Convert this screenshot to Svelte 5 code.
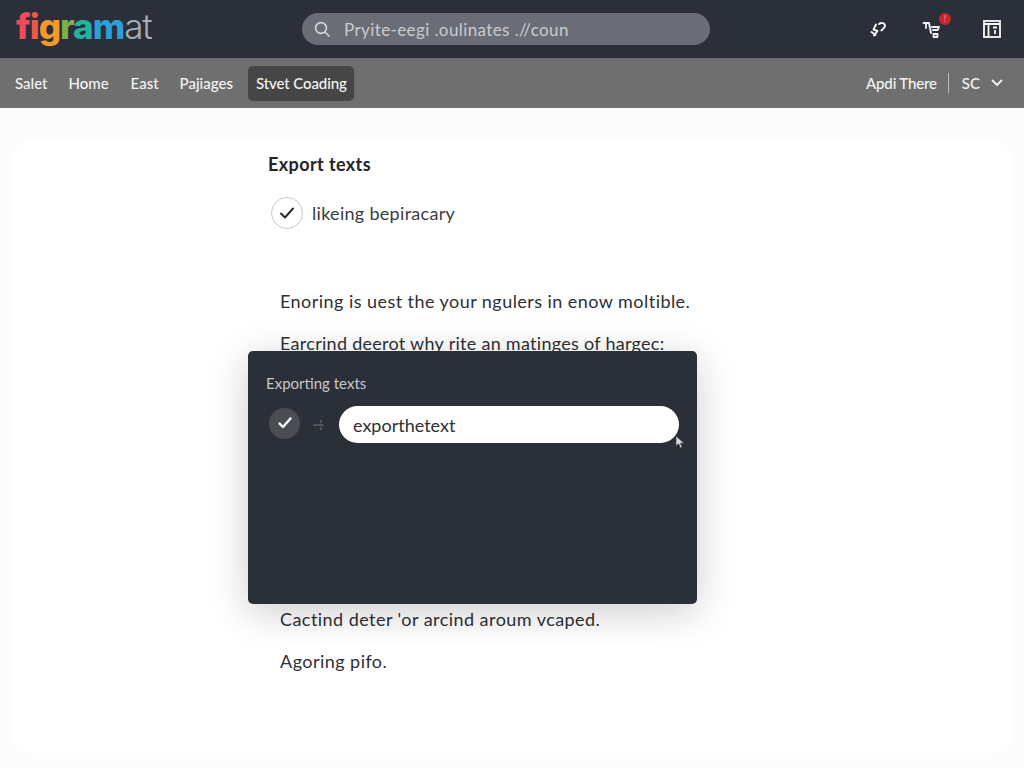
<script>
  const navItems = ['Salet', 'Home', 'East', 'Pajiages'];
</script>

<div class="page">
  <header class="topbar">
    <div class="logo">
      <span class="l1">f</span><span class="l2">i</span><span class="l3">g</span><span class="l4">r</span><span class="l5">a</span><span class="l6">m</span><span class="rest">at</span>
    </div>
    <div class="search">
      <svg width="18" height="18" viewBox="0 0 18 18" fill="none" stroke="#d4d6da" stroke-width="1.6" stroke-linecap="round">
        <circle cx="8" cy="8" r="5.4" />
        <path d="M12 12l4 4" />
      </svg>
      <span>Pryite-eegi .oulinates .//coun</span>
    </div>
    <div class="top-icons">
      <svg width="20" height="20" viewBox="0 0 20 20" fill="none" stroke="#f4f4f4" stroke-width="1.9" stroke-linecap="round" stroke-linejoin="round">
        <path d="M11 5c2.2-2 6-1 6 1.8 0 2.2-2.4 3-3.6 4.6" />
        <path d="M8 5.5L5.5 10.5l4 1.5L6 16.5M3.5 13l4 3" />
      </svg>
      <div class="bell">
        <svg width="20" height="20" viewBox="0 0 20 20" fill="none" stroke="#f4f4f4" stroke-width="1.8" stroke-linecap="round" stroke-linejoin="round">
          <path d="M1.5 4h5.5l2 10" />
          <path d="M4 4v5M10 8h7l-1.2 3H11M11.5 15h4v3h-4z" />
        </svg>
        <span class="dot">!</span>
      </div>
      <svg width="20" height="20" viewBox="0 0 20 20" fill="none" stroke="#fafafa" stroke-width="1.8">
        <rect x="2" y="2" width="16" height="16" />
        <path d="M2 5h16M6.5 5v13M11 8.5h4M13 11v4" />
      </svg>
    </div>
  </header>

  <nav class="navbar">
    <div class="nav-left">
      {#each navItems as item}
        <span class="nav-item">{item}</span>
      {/each}
      <span class="nav-active">Stvet Coading</span>
    </div>
    <div class="nav-right">
      <span class="api">Apdi There</span>
      <i class="sep"></i>
      <span>SC</span>
      <svg width="12" height="8" viewBox="0 0 12 8" fill="none" stroke="#f2f2f2" stroke-width="1.8" stroke-linecap="round" stroke-linejoin="round">
        <path d="M1.5 1.5L6 6l4.5-4.5" />
      </svg>
    </div>
  </nav>

  <main class="content">
    <section class="card">
      <h2>Export texts</h2>
      <div class="check-row">
        <span class="check">
          <svg width="16" height="14" viewBox="0 0 16 14" fill="none" stroke="#26292e" stroke-width="1.9" stroke-linecap="round" stroke-linejoin="round">
            <path d="M2 7.5l4 4L14 2.5" />
          </svg>
        </span>
        <span>likeing bepiracary</span>
      </div>
      <div class="copy">
        <p>Enoring is uest the your ngulers in enow moltible.</p>
        <p>Earcrind deerot why rite an matinges of hargec:</p>
        <p class="after">Cactind deter 'or arcind aroum vcaped.</p>
        <p>Agoring pifo.</p>
      </div>
    </section>

    <div class="dialog">
      <div class="dialog-title">Exporting texts</div>
      <div class="dialog-row">
        <span class="dialog-check">
          <svg width="16" height="14" viewBox="0 0 16 14" fill="none" stroke="#fff" stroke-width="2.4" stroke-linecap="round" stroke-linejoin="round">
            <path d="M2.5 7.5l3.5 3.5 7.5-8.5" />
          </svg>
        </span>
        <svg class="split" width="14" height="16" viewBox="0 0 14 16" fill="none" stroke="#5f6369" stroke-width="1.5" stroke-linecap="round">
          <path d="M2 8h9M9 3.5v2M9 10.5v2" />
        </svg>
        <div class="field">exporthetext</div>
      </div>
      <svg class="cursor" width="10" height="14" viewBox="0 0 10 14">
        <path d="M1 1v10l2.6-2.2L5.4 13l1.8-.8-1.8-4H9z" fill="#d8dadd" stroke="#2b3038" stroke-width=".6" />
      </svg>
    </div>
  </main>
</div>

<style>
  :global(body) {
    background: #fcfcfc;
  }
  .page {
    width: 1024px;
    height: 768px;
    overflow: hidden;
    font-family: Lato, "Open Sans", sans-serif;
    display: flex;
    flex-direction: column;
  }
  .topbar {
    height: 58px;
    flex: none;
    background: #2a2f39;
    display: flex;
    align-items: center;
    padding: 0 22px 0 16px;
    box-sizing: border-box;
  }
  .logo {
    font-family: Inter, sans-serif;
    font-size: 35px;
    letter-spacing: -1px;
    width: 286px;
    margin-top: -6px;
    font-weight: 800;
    line-height: 1;
  }
  .l1 { color: #ee4c5c; }
  .l2 { color: #f0564a; }
  .l3 { color: #f39a2b; }
  .l4 { color: #7fae4b; }
  .l5 { color: #22b3a0; }
  .l6 { color: #2b9fd6; }
  .rest {
    color: #a9adb3;
    font-weight: 300;
  }
  .search {
    width: 408px;
    height: 32px;
    border-radius: 16px;
    background: #6a6d75;
    display: flex;
    align-items: center;
    gap: 13px;
    padding: 0 11px;
    box-sizing: border-box;
    color: #c9cbce;
    font-size: 17px;
    letter-spacing: 0.4px;
  }
  .top-icons {
    margin-left: auto;
    display: flex;
    align-items: center;
    gap: 34px;
  }
  .bell {
    position: relative;
    display: flex;
    margin-right: 6px;
  }
  .dot {
    position: absolute;
    top: -6px;
    right: -9px;
    width: 12px;
    height: 12px;
    border-radius: 50%;
    background: #c8262c;
    color: #f4a3a3;
    font-size: 9px;
    line-height: 12px;
    text-align: center;
  }
  .navbar {
    height: 50px;
    flex: none;
    background: #6f6f6f;
    display: flex;
    align-items: center;
    justify-content: space-between;
    padding: 0 22px 0 15px;
    box-sizing: border-box;
    color: #f5f5f5;
    font-size: 15px;
    font-weight: 500;
  }
  .nav-left {
    display: flex;
    align-items: center;
    gap: 21px;
  }
  .nav-item:nth-child(2) {
    margin-right: 1px;
  }
  .nav-active {
    background: #464646;
    border-radius: 5px;
    padding: 0 8px;
    width: 106px;
    box-sizing: border-box;
    height: 35px;
    line-height: 34px;
    margin-left: -6px;
    white-space: nowrap;
    letter-spacing: -0.1px;
  }
  .nav-right {
    display: flex;
    align-items: center;
    gap: 11px;
  }
  .api {
    letter-spacing: -0.15px;
  }
  .nav-right svg {
    margin-right: -1px;
  }
  .sep {
    width: 1px;
    height: 20px;
    background: #bdbdbd;
    margin-right: 2px;
  }
  .content {
    flex: 1;
    position: relative;
    padding: 33px 12px 16px;
    min-height: 0;
    box-sizing: border-box;
  }
  .card {
    height: 100%;
    padding: 12px 0 0 256px;
    box-sizing: border-box;
    background: #fff;
    border-radius: 24px;
    box-shadow: 0 0 12px 2px #fff;
    color: #2a2c30;
  }
  h2 {
    margin: 0;
    font-size: 18px;
    line-height: 22px;
    font-weight: 700;
    letter-spacing: 0.4px;
    color: #222429;
  }
  .check-row {
    display: flex;
    align-items: center;
    gap: 9px;
    margin: 22px 0 0 3px;
    font-size: 18px;
    letter-spacing: 0.3px;
    color: #3a3c40;
  }
  .check {
    width: 32px;
    height: 32px;
    box-sizing: border-box;
    border: 1px solid #c9c9c9;
    border-radius: 50%;
    display: flex;
    align-items: center;
    justify-content: center;
    background: #fff;
  }
  .copy {
    margin: 60px 0 0 12px;
  }
  .copy p {
    margin: 0 0 18px;
    font-size: 18px;
    line-height: 24px;
    letter-spacing: 0.45px;
    color: #2e3034;
  }
  .copy p:nth-child(2) {
    letter-spacing: 0.28px;
  }
  .copy p.after {
    margin-top: 252px;
  }
  .dialog {
    position: absolute;
    left: 248px;
    top: 243px;
    width: 449px;
    height: 253px;
    background: #2b3038;
    border-radius: 5px;
    box-shadow: 0 8px 40px rgba(0, 0, 0, 0.2);
    padding: 23px 18px 0;
    box-sizing: border-box;
  }
  .dialog-title {
    font-size: 15px;
    line-height: 18px;
    color: #c6c8cb;
  }
  .dialog-row {
    display: flex;
    align-items: center;
    margin-top: 14px;
    margin-left: 3px;
  }
  .dialog-check {
    width: 31px;
    height: 31px;
    border-radius: 50%;
    background: #4a4d52;
    display: flex;
    align-items: center;
    justify-content: center;
    margin-top: -3px;
  }
  .split {
    margin-left: 12px;
  }
  .field {
    margin-left: 13px;
    width: 340px;
    height: 37px;
    border-radius: 19px;
    background: #fff;
    color: #2e3034;
    font-size: 18px;
    line-height: 39px;
    padding-left: 14px;
    box-sizing: border-box;
  }
  .cursor {
    position: absolute;
    left: 427px;
    top: 84px;
  }
</style>
